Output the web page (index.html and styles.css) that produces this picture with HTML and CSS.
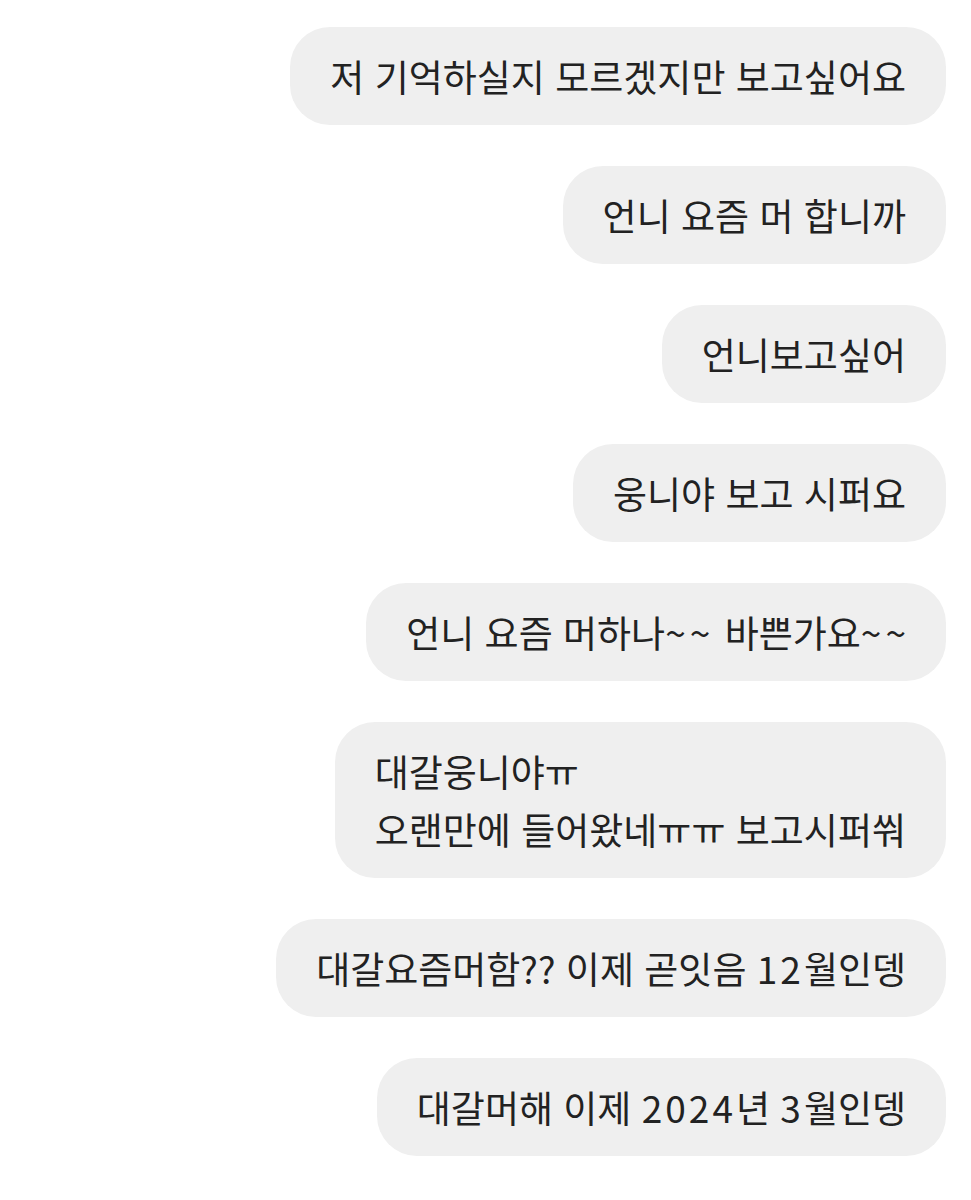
FILE: index.html
```html
<!DOCTYPE html>
<html lang="ko">
<head>
  <meta charset="UTF-8" />
  <title>메시지</title>
  <meta name="viewport" content="width=device-width, initial-scale=1.0" />
  <link rel="stylesheet" href="styles.css">
</head>
<body>

  <div class="chat">
    <div class="bubble">저 기억하실지 모르겠지만 보고싶어요</div>
    <div class="bubble">언니 요즘 머 합니까</div>
    <div class="bubble">언니보고싶어</div>
    <div class="bubble">웅니야 보고 시퍼요</div>
    <div class="bubble">언니 요즘 머하나<span class="wide">~~</span> 바쁜가요<span class="wide">~</span>~</div>
    <div class="bubble">대갈웅니야ㅠ<br>오랜만에 들어왔네ㅠㅠ 보고시퍼쒀</div>
    <div class="bubble">대갈요즘머함?? 이제 곧잇음 <span class="num">12</span>월인뎅</div>
    <div class="bubble">대갈머해 이제 <span class="num">2024</span>년 <span class="num">3</span>월인뎅</div>
  </div>

</body>
</html>
```

FILE: styles.css
```css
body {
  font-family: "Noto Sans CJK KR", "Noto Sans", sans-serif;
  background: #ffffff;
  margin: 0;
}

.chat {
  display: flex;
  flex-direction: column;
  align-items: flex-end;
  gap: 41px;
  padding: 27px 25px 0 0;
}

.bubble {
  background: #efefef;
  color: #222222;
  font-size: 37px;
  line-height: 58px;
  padding: 20px 40px;
  border-radius: 40px;
}

.num {
  letter-spacing: 3px;
}

.wide {
  letter-spacing: 4px;
}
```
